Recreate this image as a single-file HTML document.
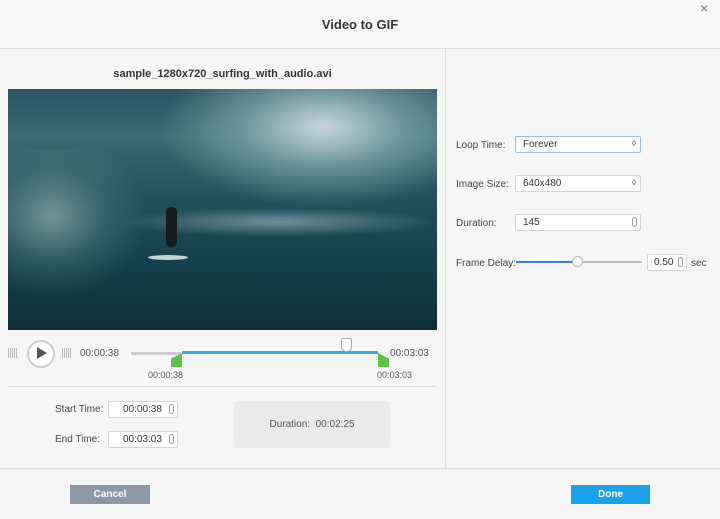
<!DOCTYPE html><html><head><style>
body{margin:0;width:720px;height:519px;background:#f6f6f6;font-family:"Liberation Sans",sans-serif;font-size:10px;color:#444;position:relative;overflow:hidden}
.a{position:absolute}
.inp{position:absolute;background:#fff;border:1px solid #d4d4d4;border-radius:2px;box-sizing:border-box;padding-left:7px;line-height:15px;color:#333}
.sp{position:absolute;right:3px;top:2px;width:5px;height:10px;border:1px solid #999;border-radius:3px;box-sizing:border-box}
</style></head><body>
<div class="a" style="left:0;top:0;width:720px;height:48px;background:#f8f8f8;border-bottom:1px solid #ddd"></div>
<div class="a" style="left:0;top:17px;width:720px;text-align:center;font-weight:bold;font-size:13px;color:#333">Video to GIF</div>
<div class="a" style="left:700px;top:0px;font-size:14px;color:#777">×</div>
<div class="a" style="left:445px;top:49px;width:1px;height:419px;background:#ddd"></div>
<div class="a" style="left:0;top:68px;width:445px;text-align:center;font-weight:bold;font-size:11px;color:#333">sample_1280x720_surfing_with_audio.avi</div>
<div class="a" style="left:8px;top:89px;width:429px;height:241px;background:#163f4b;overflow:hidden">
<div class="a" style="left:0;top:0;width:429px;height:241px;background:linear-gradient(180deg,#2a5360 0%,#3d6a75 20%,#244f5c 45%,#1b4754 60%,#123a46 80%,#0e2f3a 100%)"></div>
<div class="a" style="left:150px;top:-30px;width:300px;height:150px;background:radial-gradient(ellipse at 55% 45%,rgba(220,235,240,.85) 0%,rgba(150,185,195,.55) 35%,rgba(40,80,90,0) 70%)"></div>
<div class="a" style="left:-20px;top:60px;width:160px;height:150px;background:radial-gradient(ellipse at 40% 45%,rgba(170,195,200,.6) 0%,rgba(100,140,150,.3) 40%,rgba(30,70,80,0) 70%)"></div>
<div class="a" style="left:110px;top:118px;width:320px;height:30px;background:radial-gradient(ellipse,rgba(190,210,215,.5),rgba(40,80,90,0) 70%)"></div>
<div class="a" style="left:158px;top:118px;width:11px;height:40px;background:#151a1c;border-radius:5px"></div>
<div class="a" style="left:140px;top:166px;width:40px;height:5px;background:#c9d6d8;border-radius:50%"></div>
</div>
<div class="a" style="left:8px;top:348px;width:10px;height:10px;background:repeating-linear-gradient(90deg,#bbb 0 1px,transparent 1px 2px)"></div>
<div class="a" style="left:62px;top:348px;width:10px;height:10px;background:repeating-linear-gradient(90deg,#bbb 0 1px,transparent 1px 2px)"></div>
<div class="a" style="left:27px;top:340px;width:24px;height:24px;border-radius:50%;background:#fff;border:2px solid #ccc"></div>
<div class="a" style="left:37px;top:347px;width:0;height:0;border-left:10px solid #555;border-top:6px solid transparent;border-bottom:6px solid transparent"></div>
<div class="a" style="left:80px;top:348px;color:#555">00:00:38</div>
<div class="a" style="left:131px;top:352px;width:50px;height:3px;background:#ccc"></div>
<div class="a" style="left:182px;top:351px;width:196px;height:3px;background:#3aa6e8"></div>
<div class="a" style="left:171px;top:353px;width:11px;height:14px;background:#5cc34a;clip-path:polygon(100% 0,100% 100%,0 100%,0 40%)"></div>
<div class="a" style="left:378px;top:353px;width:11px;height:14px;background:#5cc34a;clip-path:polygon(0 0,100% 40%,100% 100%,0 100%)"></div>
<div class="a" style="left:341px;top:338px;width:9px;height:12px;background:#fff;border:1px solid #aaa;border-radius:2px 2px 5px 5px"></div>
<div class="a" style="left:390px;top:348px;color:#555">00:03:03</div>
<div class="a" style="left:148px;top:370px;font-size:9px;color:#555">00:00:38</div>
<div class="a" style="left:377px;top:370px;font-size:9px;color:#555">00:03:03</div>
<div class="a" style="left:8px;top:386px;width:429px;height:1px;background:#ddd"></div>
<div class="a" style="left:55px;top:404px">Start Time:</div>
<div class="inp" style="left:108px;top:401px;width:70px;height:17px;padding-left:14px">00:00:38<span class="sp"></span></div>
<div class="a" style="left:55px;top:434px">End Time:</div>
<div class="inp" style="left:108px;top:431px;width:70px;height:17px;padding-left:14px">00:03:03<span class="sp"></span></div>
<div class="a" style="left:234px;top:401px;width:156px;height:47px;background:#eaeaea;border-radius:3px;text-align:center;line-height:47px;color:#555">Duration:&nbsp; 00:02:25</div>
<div class="a" style="left:456px;top:140px">Loop Time:</div>
<div class="inp" style="left:515px;top:136px;width:126px;height:17px;border-color:#9bbbe0">Forever<span class="sp" style="height:9px;border:none;font-size:8px;line-height:8px;top:3px">◊</span></div>
<div class="a" style="left:456px;top:179px">Image Size:</div>
<div class="inp" style="left:515px;top:175px;width:126px;height:17px">640x480<span class="sp" style="height:9px;border:none;font-size:8px;line-height:8px;top:3px">◊</span></div>
<div class="a" style="left:456px;top:218px">Duration:</div>
<div class="inp" style="left:515px;top:214px;width:126px;height:17px">145<span class="sp"></span></div>
<div class="a" style="left:456px;top:258px">Frame Delay:</div>
<div class="a" style="left:516px;top:261px;width:62px;height:2px;background:#3a7fd8"></div>
<div class="a" style="left:578px;top:261px;width:64px;height:2px;background:#bbb"></div>
<div class="a" style="left:572px;top:256px;width:11px;height:11px;border-radius:50%;background:#fff;border:1px solid #bbb;box-sizing:border-box"></div>
<div class="inp" style="left:647px;top:254px;width:40px;height:17px;padding-left:6px">0.50<span class="sp"></span></div>
<div class="a" style="left:691px;top:258px">sec</div>
<div class="a" style="left:0;top:468px;width:720px;height:1px;background:#ddd"></div>
<div class="a" style="left:70px;top:485px;width:80px;height:19px;background:#8c97a8;color:#fff;font-weight:bold;text-align:center;line-height:19px">Cancel</div>
<div class="a" style="left:571px;top:485px;width:79px;height:19px;background:#1ba2ea;color:#fff;font-weight:bold;text-align:center;line-height:19px">Done</div>
</body></html>
